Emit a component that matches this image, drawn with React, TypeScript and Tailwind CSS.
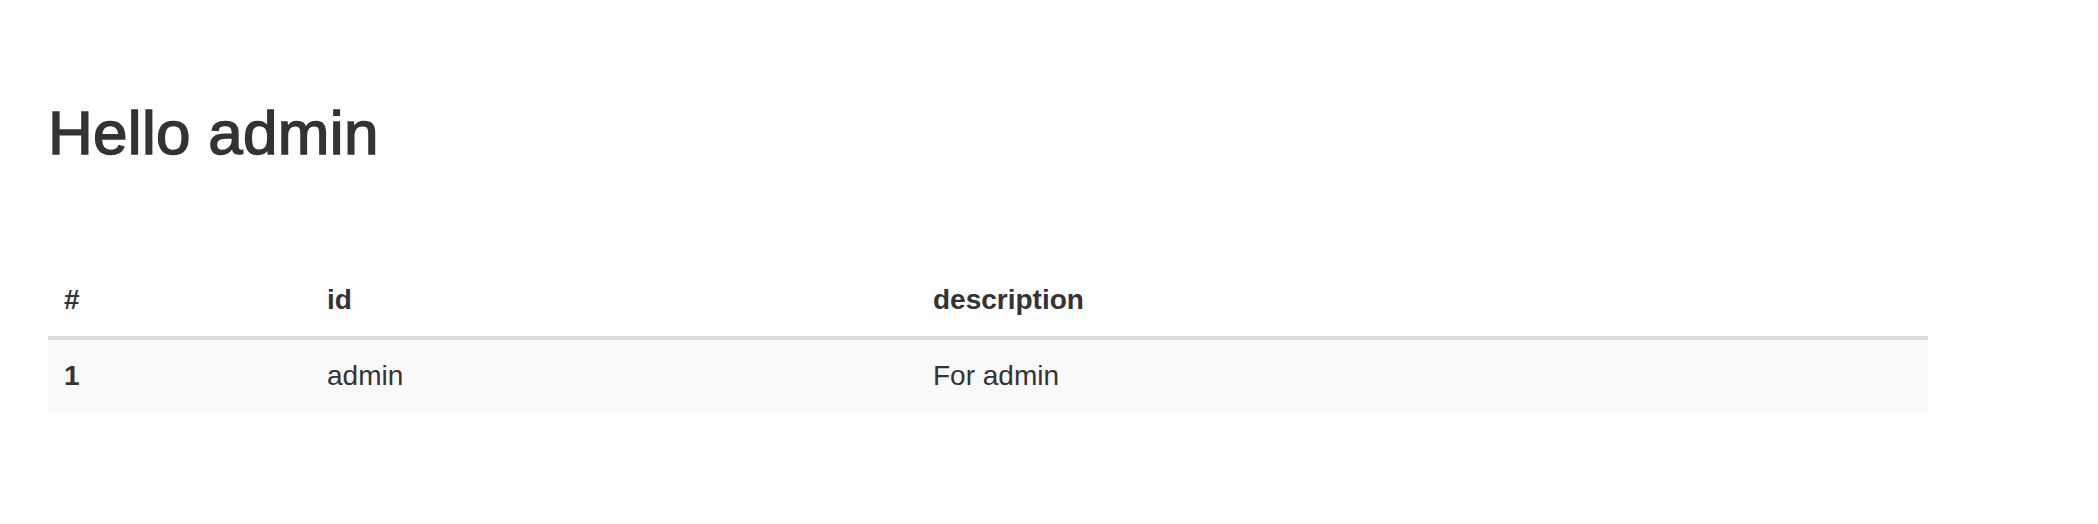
const rows = [{ n: 1, id: 'admin', description: 'For admin' }];

const App = () => {
  return (
    <div className="min-h-[524px] bg-white pl-[48px] pt-[100px] text-[#333] font-['Liberation_Sans',Arial,sans-serif]">
      {/* medium weight approximated with a thin stroke */}
      <h1 className="m-0 text-[62px] leading-[66px] font-normal tracking-[0.3px] [-webkit-text-stroke:1.5px_#333]">Hello admin</h1>

      <table className="mt-[98px] w-[1880px] table-fixed border-collapse text-[28px] leading-[40px]">
        <colgroup>
          <col className="w-[263px]" />
          <col className="w-[606px]" />
          <col />
        </colgroup>
        <thead>
          <tr>
            <th className="p-[16px] text-left font-bold border-b-[4px] border-[#ddd]">#</th>
            <th className="p-[16px] text-left font-bold border-b-[4px] border-[#ddd]">id</th>
            <th className="p-[16px] text-left font-bold border-b-[4px] border-[#ddd]">description</th>
          </tr>
        </thead>
        <tbody>
          {rows.map((r) => (
            <tr key={r.n} className="bg-[#f9f9f9]">
              <th className="p-[16px] text-left font-bold">{r.n}</th>
              <td className="p-[16px]">{r.id}</td>
              <td className="p-[16px]">{r.description}</td>
            </tr>
          ))}
        </tbody>
      </table>
    </div>
  );
};

export default App;
